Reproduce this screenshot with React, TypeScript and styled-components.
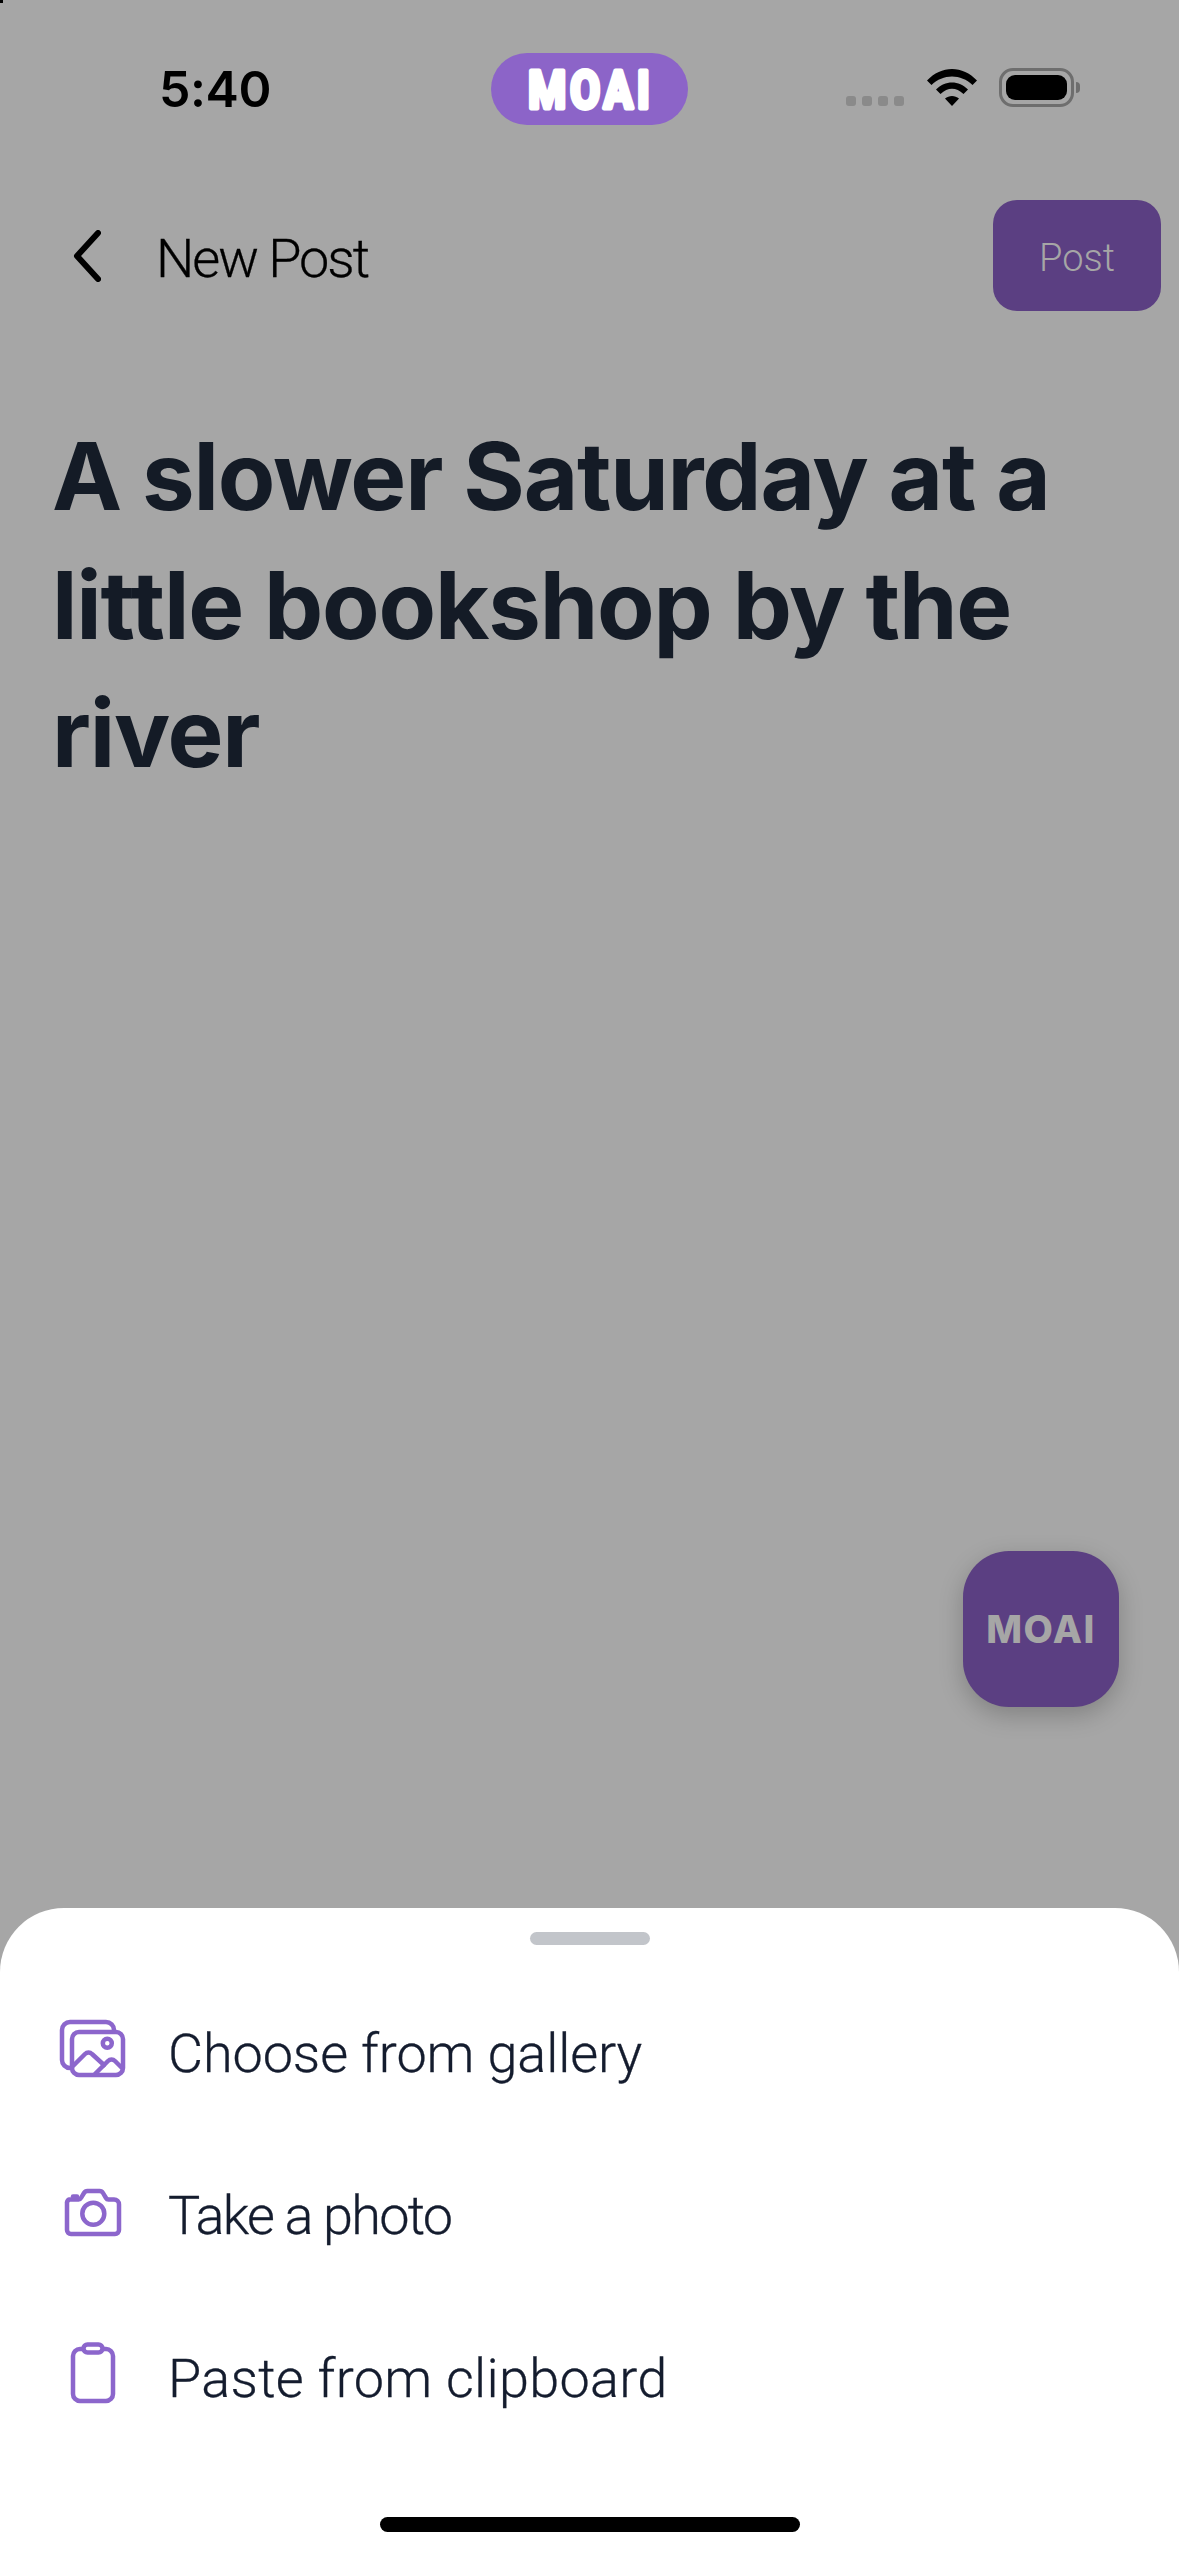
import React from "react";
import styled, { createGlobalStyle } from "styled-components";

const GlobalStyle = createGlobalStyle`
  html, body {
    margin: 0;
    padding: 0;
    background: #a6a6a6;
  }
  * {
    box-sizing: border-box;
  }
`;

const Page = styled.div`
  width: 1179px;
  height: 2556px;
  position: relative;
  display: flex;
  flex-direction: column;
  overflow: hidden;
  background: #a6a6a6;
  font-family: Roboto, "Liberation Sans", sans-serif;

  &::before {
    content: "";
    position: absolute;
    left: 0;
    top: 0;
    width: 3px;
    height: 3px;
    background: #000;
  }
`;

const StatusBar = styled.div`
  height: 200px;
  padding-top: 53px;
  display: grid;
  grid-template-columns: 491px 197px 1fr;
  align-items: start;
`;

const Time = styled.div`
  padding: 10px 0 0 159px;
  font: 600 50px/52px Inter, sans-serif;
  letter-spacing: -0.4px;
  color: #000;
`;

const LogoPill = styled.div`
  height: 72px;
  border-radius: 36px;
  background: #8c64c8;
  display: flex;
  align-items: center;
  justify-content: center;
`;

const LogoMark = styled.svg`
  display: block;
  overflow: visible;
  text {
    font: 700 52px Roboto, sans-serif;
    letter-spacing: 5px;
    fill: #fff;
    stroke: #fff;
    stroke-width: 5;
    stroke-linejoin: round;
  }
`;

const StatusIcons = styled.div`
  display: flex;
  align-items: flex-start;
  padding: 15px 0 0 158px;
`;

const SignalDots = styled.div`
  display: flex;
  gap: 6px;
  margin: 28px 23px 0 0;
`;

const SignalDot = styled.span`
  width: 10px;
  height: 10px;
  border-radius: 3px;
  background: #8a8a8a;
`;

const Battery = styled.div`
  width: 75px;
  height: 39px;
  margin-left: 22px;
  padding: 4px;
  border: 3px solid #6e6e6e;
  border-radius: 14px;
  position: relative;

  &::before {
    content: "";
    display: block;
    height: 100%;
    background: #000;
    border-radius: 9px;
  }

  &::after {
    content: "";
    position: absolute;
    right: -9px;
    top: 11px;
    width: 4px;
    height: 11px;
    background: #6e6e6e;
    border-radius: 0 4px 4px 0;
  }
`;

const Header = styled.div`
  height: 111px;
  padding: 0 18px 0 73px;
  display: flex;
  align-items: center;
`;

const BackIcon = styled.svg`
  width: 28px;
  height: 52px;
  margin-right: 55px;
`;

const HeaderTitle = styled.div`
  flex: 1;
  padding-top: 6px;
  font-weight: 300;
  font-size: 54px;
  letter-spacing: -2px;
  -webkit-text-stroke: 0.3px #000;
  color: #000;
`;

const PostButton = styled.button`
  width: 168px;
  height: 111px;
  padding: 4px 0 0;
  border: 0;
  border-radius: 24px;
  background: #5b3f82;
  color: #a6a6a6;
  font: 300 38px Roboto, sans-serif;
`;

const Title = styled.h1`
  margin: 101px 0 0;
  padding: 0 52px;
  font: 700 94px/128.5px Inter, sans-serif;
  letter-spacing: -1.200px;
  color: #141b26;
`;

const Body = styled.div`
  flex: 1;
  display: flex;
  justify-content: flex-end;
  align-items: flex-end;
  padding: 0 60px 201px 0;
`;

const Fab = styled.div`
  width: 156px;
  height: 156px;
  border-radius: 46px;
  background: #5b3f82;
  box-shadow: 0 8px 24px rgba(0, 0, 0, 0.22);
  display: flex;
  align-items: center;
  justify-content: center;
  font: 800 38px Inter, sans-serif;
  letter-spacing: 1.500px;
  color: #a6a6a6;
`;

const Sheet = styled.div`
  height: 648px;
  background: #fff;
  border-radius: 64px 64px 0 0;
  padding-top: 24px;
  display: flex;
  flex-direction: column;
`;

const Handle = styled.div`
  width: 120px;
  height: 13px;
  border-radius: 7px;
  background: #c2c5ca;
  align-self: center;
  margin-bottom: 26px;
`;

const Row = styled.div`
  height: 162.5px;
  padding-left: 60px;
  display: flex;
  align-items: center;
`;

const IconSlot = styled.div`
  width: 66px;
  margin: 0 42px 6px 0;
  display: flex;
  justify-content: center;
  flex-shrink: 0;
`;

const Icon = styled.svg`
  display: block;
  flex-shrink: 0;
  fill: none;
  stroke: #8c66cc;
  stroke-width: 4.5;
  stroke-linecap: round;
  stroke-linejoin: round;
`;

const RowLabel = styled.span<{ $tracking: number }>`
  padding-top: 2px;
  font-weight: 300;
  font-size: 54px;
  letter-spacing: ${(props) => props.$tracking}px;
  -webkit-text-stroke: 0.3px #141c2e;
  color: #141c2e;
`;

const HomeBar = styled.div`
  width: 420px;
  height: 15px;
  border-radius: 8px;
  background: #000;
  align-self: center;
  margin-top: auto;
  margin-bottom: 24px;
`;

function WifiIcon() {
  return (
    <svg width="50" height="38" viewBox="0 0 50 38">
      <path d="M0 12.5C14-3 36-3 50 12.5L45.5 17C34 5.5 16 5.5 4.500 17z" fill="#000" />
      <path d="M9 21.500C18 12 32 12 41 21.500L36.500 26C29 19 21 19 13.500 26z" fill="#000" />
      <path d="M18 30.500C22 27 28 27 32 30.500L25 38z" fill="#000" />
    </svg>
  );
}

function GalleryIcon() {
  return (
    <Icon width="68" height="60" viewBox="0 0 68 60">
      <path d="M55 12v-1a8 8 0 0 0-8-8H11a8 8 0 0 0-8 8v30a8 8 0 0 0 8 8h2" />
      <rect x="13" y="13" width="51" height="43" rx="7" />
      <circle cx="48.300" cy="24.300" r="4.500" />
      <path d="M14 47l12-12a5 5 0 0 1 7 0l12 11" />
      <path d="M36 55l13-13a5 5 0 0 1 7 0l7 7" />
    </Icon>
  );
}

function CameraIcon() {
  return (
    <Icon width="66" height="52" viewBox="0 0 66 52">
      <path d="M9 13.500h9.500a3 3 0 0 0 2.500-1.500l3-5a4 4 0 0 1 3.500-2h12a4 4 0 0 1 3.500 2l3 5a3 3 0 0 0 2.500 1.500h5.500a5 5 0 0 1 5 5V44a4 4 0 0 1-4 4H11a4 4 0 0 1-4-4V18a4.500 4.500 0 0 1 2-4.500z" />
      <circle cx="33.300" cy="27.700" r="11" />
      <path d="M13 10.500h4" />
    </Icon>
  );
}

function ClipboardIcon() {
  return (
    <Icon width="54" height="68" viewBox="0 0 54 68">
      <path d="M17 9h-3a7 7 0 0 0-7 7v38a7 7 0 0 0 7 7h26a7 7 0 0 0 7-7V16a7 7 0 0 0-7-7h-3" />
      <rect x="17.500" y="4.500" width="19" height="8" rx="4" />
    </Icon>
  );
}

const options = [
  { label: "Choose from gallery", tracking: -0.1, icon: <GalleryIcon /> },
  { label: "Take a photo", tracking: -1.75, icon: <CameraIcon /> },
  { label: "Paste from clipboard", tracking: 0.3, icon: <ClipboardIcon /> },
];

export default function App() {
  return (
    <>
      <GlobalStyle />
      <Page>
        <StatusBar>
          <Time>5:40</Time>
          <LogoPill>
            <LogoMark width="140" height="60" viewBox="0 0 140 60">
              <text transform="translate(71 48.500) scale(0.83 1)" textAnchor="middle">MOAI</text>
            </LogoMark>
          </LogoPill>
          <StatusIcons>
            <SignalDots>
              <SignalDot />
              <SignalDot />
              <SignalDot />
              <SignalDot />
            </SignalDots>
            <WifiIcon />
            <Battery />
          </StatusIcons>
        </StatusBar>

        <Header>
          <BackIcon viewBox="0 0 28 52" fill="none" stroke="#000" strokeWidth="6" strokeLinecap="round" strokeLinejoin="round">
            <path d="M25 3L4 26l21 23" />
          </BackIcon>
          <HeaderTitle>New Post</HeaderTitle>
          <PostButton>Post</PostButton>
        </Header>

        <Title>A slower Saturday at a little bookshop by the river</Title>

        <Body>
          <Fab>MOAI</Fab>
        </Body>

        <Sheet>
          <Handle />
          {options.map((option) => (
            <Row key={option.label}>
              <IconSlot>{option.icon}</IconSlot>
              <RowLabel $tracking={option.tracking}>{option.label}</RowLabel>
            </Row>
          ))}
          <HomeBar />
        </Sheet>
      </Page>
    </>
  );
}
